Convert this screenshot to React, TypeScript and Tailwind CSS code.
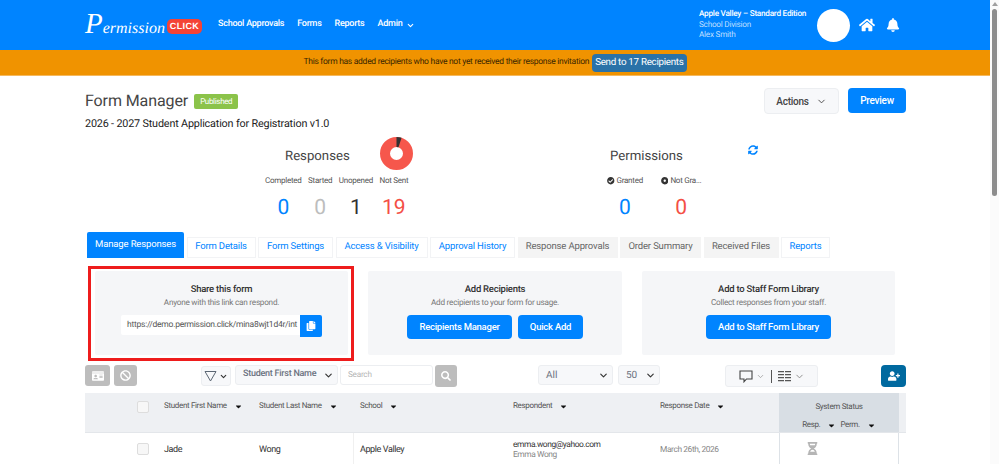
import { ChevronDown } from "lucide-react"
import {
  FaBan,
  FaBell,
  FaCaretDown,
  FaCheckCircle,
  FaCopy,
  FaDotCircle,
  FaHome,
  FaHourglassHalf,
  FaIdCard,
  FaSearch,
  FaSyncAlt,
  FaUserPlus,
} from "react-icons/fa"

function NavBar() {
  return (
    <header className="flex h-[50px] shrink-0 items-center bg-[#0084ff] pl-[85px] text-white">
      <div className="relative flex h-[50px] w-[117px] items-center">
        <span className="mt-[-2px] whitespace-nowrap font-['Liberation_Serif',serif] text-[16px] italic leading-none tracking-normal">
          <span className="text-[29px]">P</span>ermission
        </span>
        <span className="absolute left-[82px] top-[19px] flex h-[15px] w-[35px] items-center justify-center rounded-[5px] bg-[#f44336] font-['Liberation_Sans',sans-serif] text-[9px] font-bold leading-none tracking-[0.4px]">
          CLICK
        </span>
      </div>
      <nav className="ml-[16px] flex items-center gap-[13px] text-[9px] font-medium">
        <span>School Approvals</span>
        <span>Forms</span>
        <span>Reports</span>
        <span className="flex items-center gap-[4px]">
          Admin <ChevronDown size={9} strokeWidth={3} />
        </span>
      </nav>
      <div className="ml-auto flex items-center pr-[90px]">
        <div className="w-[118px] whitespace-nowrap text-[8.2px] leading-[10.5px] text-[#bfdfff]">
          <div className="font-medium text-white">Apple Valley – Standard Edition</div>
          <div>School Division</div>
          <div>Alex Smith</div>
        </div>
        <div className="h-[33px] w-[33px] rounded-full bg-white" />
        <FaHome className="ml-[9px] text-[16px]" />
        <FaBell className="ml-[11px] text-[14px]" />
      </div>
    </header>
  )
}

function Notice() {
  return (
    <div className="flex h-[26px] shrink-0 items-center justify-center gap-[3px] border-b border-[#f5b95e] bg-[#f09300] text-[8.5px] tracking-[-0.29px] text-[#3a2600]">
      <span>This form has added recipients who have not yet received their response invitation</span>
      <span className="rounded-[4px] bg-[#2a72a8] px-[3px] text-[9.8px] leading-[18px] text-white">Send to 17 Recipients</span>
    </div>
  )
}

function Stat({ label, value, color, icon }: { label: string; value: string; color: string; icon?: React.ReactNode }) {
  return (
    <div className="flex flex-col items-center">
      <div className="flex items-center gap-[2px] whitespace-nowrap text-[8px] leading-[12px] text-[#555]">
        {icon}
        {label}
      </div>
      <div className={`mt-[9px] text-[21px] leading-[24px] tracking-normal ${color}`}>{value}</div>
    </div>
  )
}

function Stats() {
  return (
    <section className="mt-[5px] flex h-[93px]">
      <div className="ml-[180px] w-[150px]">
        <div className="relative h-[34px]">
          <h2 className="ml-[20px] pt-[11px] text-[13.2px] leading-[18px] tracking-normal text-[#444]">Responses</h2>
          <svg className="absolute left-[115px] top-[0px]" width="33" height="33" viewBox="0 0 33 33">
            <circle cx="16.5" cy="16.5" r="11.5" fill="none" stroke="#f6574c" strokeWidth="10" />
            <circle cx="16.5" cy="16.5" r="11.5" fill="none" stroke="#333" strokeWidth="10" strokeDasharray="3.6 72.7" transform="rotate(-90 16.5 16.5)" />
          </svg>
        </div>
        <div className="mt-[4px] flex gap-[6.5px]">
          <Stat label="Completed" value="0" color="text-[#0084ff]" />
          <Stat label="Started" value="0" color="text-[#bdbdbd]" />
          <Stat label="Unopened" value="1" color="text-[#333]" />
          <Stat label="Not Sent" value="19" color="text-[#f44f45]" />
        </div>
      </div>
      <div className="ml-[192px] w-[135px]">
        <h2 className="ml-[3px] pt-[11px] text-[13.2px] leading-[18px] tracking-normal text-[#444]">Permissions</h2>
        <div className="mt-[9px] flex gap-[18px]">
          <Stat label="Granted" value="0" color="text-[#0084ff]" icon={<FaCheckCircle className="text-[7.5px] text-[#333]" />} />
          <Stat label="Not Gra..." value="0" color="text-[#f44f45]" icon={<FaDotCircle className="text-[7.5px] text-[#333]" />} />
        </div>
      </div>
      <FaSyncAlt className="ml-[6px] mt-[8px] text-[10px] text-[#0084ff]" />
    </section>
  )
}

const tabs = [
  { label: "Form Details", width: "w-[69px]" },
  { label: "Form Settings", width: "w-[75px]" },
  { label: "Access & Visibility", width: "w-[92px]" },
  { label: "Approval History", width: "w-[85px]" },
  { label: "Response Approvals", width: "w-[100px]", off: true },
  { label: "Order Summary", width: "w-[81px]", off: true },
  { label: "Received Files", width: "w-[75px]", off: true },
  { label: "Reports", width: "w-[49px]" },
]

function Tabs() {
  return (
    <div className="ml-[2px] flex items-end gap-[2.5px] text-[9.5px] tracking-[-0.15px]">
      <div className="flex h-[26px] w-[97px] items-center justify-center rounded-t-[2px] bg-[#0084ff] text-white">Manage Responses</div>
      {tabs.map((tab) => (
        <div
          key={tab.label}
          className={`flex h-[21px] items-center justify-center border ${tab.width} ${
            tab.off ? "border-[#f4f4f4] bg-[#f4f4f4] text-[#666]" : "border-[#f2f3f5] bg-white text-[#0084ff]"
          }`}
        >
          {tab.label}
        </div>
      ))}
    </div>
  )
}

function BlueButton({ children, className }: { children: React.ReactNode; className: string }) {
  return (
    <button className={`flex h-[24px] items-center justify-center rounded-[4px] bg-[#0084ff] text-[9.5px] font-medium text-white ${className}`}>
      {children}
    </button>
  )
}

function Card({ title, text, children, className }: { title: string; text: string; children: React.ReactNode; className: string }) {
  return (
    <div className={`flex h-[84px] flex-col items-center rounded-[2px] bg-[#f5f6f8] pt-[12px] ${className}`}>
      <div className="text-[9.5px] font-medium leading-[13px] text-[#333]">{title}</div>
      <div className="mt-[1px] text-[8.2px] leading-[12px] text-[#777]">{text}</div>
      <div className="mt-[6px] flex gap-[6px]">{children}</div>
    </div>
  )
}

function Cards() {
  return (
    <div className="mt-[8px] flex items-start">
      <div className="ml-[3px] h-[95px] w-[266px] border-[3px] border-[#ee1c1c] pb-[3px] pl-[4px] pr-[3px] pt-[2px]">
        <Card title="Share this form" text="Anyone with this link can respond." className="w-full">
          <div className="flex h-[22px] items-start">
            <div className="flex h-[20px] w-[179px] items-center overflow-hidden rounded-l-[2px] bg-white pl-[6px] text-[8.5px] whitespace-nowrap text-[#555]">
              https://demo.permission.click/mina8wjt1d4r/int
            </div>
            <button className="flex h-[22px] w-[22px] items-center justify-center rounded-r-[2px] bg-[#0084ff] text-white">
              <FaCopy className="text-[10px]" />
            </button>
          </div>
        </Card>
      </div>
      <Card title="Add Recipients" text="Add recipients to your form for usage." className="ml-[14px] mt-[5px] w-[254px]">
        <BlueButton className="w-[105px]">Recipients Manager</BlueButton>
        <BlueButton className="w-[65px]">Quick Add</BlueButton>
      </Card>
      <Card title="Add to Staff Form Library" text="Collect responses from your staff." className="ml-[20px] mt-[5px] w-[253px]">
        <BlueButton className="w-[125px]">Add to Staff Form Library</BlueButton>
      </Card>
    </div>
  )
}

function GreyButton({ children, className }: { children: React.ReactNode; className: string }) {
  return <button className={`flex items-center justify-center rounded-[3px] bg-[#bdbdbd] text-white ${className}`}>{children}</button>
}

function Select({ label, className }: { label: string; className: string }) {
  return (
    <div className={`flex h-[20px] items-center justify-between whitespace-nowrap rounded-[3px] border border-[#eceef1] bg-[#f7f8fa] pl-[7px] pr-[3px] text-[#6b7280] ${className}`}>
      <span>{label}</span>
      <ChevronDown size={11} strokeWidth={2.5} className="text-[#333]" />
    </div>
  )
}

function Toolbar() {
  return (
    <div className="mt-[4px] flex h-[23px] items-start">
      <GreyButton className="h-[21px] w-[25px]">
        <FaIdCard className="text-[12px]" />
      </GreyButton>
      <GreyButton className="ml-[4px] h-[21px] w-[23px]">
        <FaBan className="text-[11px]" />
      </GreyButton>
      <div className="ml-[64px] mt-[1px] flex h-[20px] w-[30px] items-center justify-center gap-[2px] rounded-[3px] border border-[#eceef1] bg-[#f7f8fa]">
        <svg width="13" height="12" viewBox="0 0 13 12" fill="none" stroke="#5b6673" strokeWidth="1">
          <path d="M1 1.5h11L6.5 11z" />
        </svg>
        <ChevronDown size={9} strokeWidth={3} className="text-[#333]" />
      </div>
      <Select label="Student First Name" className="ml-[4px] w-[103px] text-[9px] font-medium" />
      <div className="ml-[2px] flex h-[20px] w-[93px] items-center rounded-[3px] border border-[#eceef1] bg-white pl-[7px] text-[8.2px] text-[#b5b5b5]">Search</div>
      <GreyButton className="ml-[2px] h-[22px] w-[22px]">
        <FaSearch className="text-[10px]" />
      </GreyButton>
      <Select label="All" className="ml-[81px] w-[75px] text-[10px] tracking-normal" />
      <Select label="50" className="ml-[5px] w-[42px] text-[10px] tracking-normal" />
      <div className="ml-[65px] flex h-[22px] w-[93px] items-center justify-center rounded-[3px] border border-[#eceef1] bg-[#f7f8fa] text-[#555]">
        <svg width="14" height="13" viewBox="0 0 14 13" fill="none" stroke="#444" strokeWidth="1.1">
          <path d="M1 1h12v8H7.5L5 11.8V9H1z" />
        </svg>
        <ChevronDown size={9} className="ml-[3px] text-[#999]" />
        <span className="mx-[6px] h-[13px] w-px bg-[#555]" />
        <ColumnsGlyph />
        <ChevronDown size={11} className="ml-[3px] text-[#888]" />
      </div>
      <button className="ml-[63px] flex h-[22px] w-[25px] items-center justify-center rounded-[4px] bg-[#00699f] text-white">
        <FaUserPlus className="text-[12px]" />
      </button>
    </div>
  )
}

function ColumnsGlyph() {
  return (
    <svg width="13" height="11" viewBox="0 0 13 11" fill="#555">
      <path d="M0 0h6v1.2H0zM7 0h6v1.2H7zM0 3h6v1.2H0zM7 3h6v1.2H7zM0 6h6v1.2H0zM7 6h6v1.2H7zM0 9h6v1.2H0zM7 9h6v1.2H7z" />
    </svg>
  )
}

function Checkbox() {
  return <span className="block h-[12px] w-[12px] rounded-[2px] border border-[#ddd] bg-[#f7f7f7]" />
}

function SortLabel({ label, className }: { label: string; className?: string }) {
  return (
    <span className={`flex items-center gap-[7px] ${className ?? ""}`}>
      {label}
      <FaCaretDown className="text-[9px] text-[#111]" />
    </span>
  )
}

function Table() {
  return (
    <div className="mt-[5px] text-[#555]">
      <div className="flex h-[40px] border-b border-[#e3e6ea] bg-[#eef0f3] text-[8px] tracking-[-0.33px]">
        <div className="ml-[52px] mt-[8px] w-[27px]">
          <Checkbox />
        </div>
        <SortLabel label="Student First Name" className="mt-[8px] h-[10px] w-[95px]" />
        <SortLabel label="Student Last Name" className="mt-[8px] h-[10px] w-[101px]" />
        <SortLabel label="School" className="mt-[8px] h-[10px] w-[153px]" />
        <SortLabel label="Respondent" className="mt-[8px] h-[10px] w-[147px]" />
        <SortLabel label="Response Date" className="mt-[8px] h-[10px] w-[119px]" />
        <div className="flex w-[120px] flex-col items-center bg-[#d8dee4]">
          <div className="mt-[9px] leading-[10px]">System Status</div>
          <div className="mt-[8px] flex gap-[4px] leading-[10px]">
            <SortLabel label="Resp." />
            <SortLabel label="Perm." />
          </div>
        </div>
      </div>
      <div className="flex h-[31px] text-[9px] tracking-[-0.4px] text-[#333]">
        <div className="ml-[52px] mt-[10px] w-[27px]">
          <Checkbox />
        </div>
        <div className="w-[95px] pt-[11px]">Jade</div>
        <div className="w-[94px] pt-[11px]">Wong</div>
        <div className="w-[160px] border-l border-[#f0f0f0] pl-[6px] pt-[11px]">Apple Valley</div>
        <div className="w-[147px] pt-[7px] text-[8.4px] leading-[10px]">
          <div>emma.wong@yahoo.com</div>
          <div className="text-[#888]">Emma Wong</div>
        </div>
        <div className="w-[119px] pt-[11px] text-[8.4px] text-[#888]">March 26th, 2026</div>
        <div className="w-[120px] border-x border-[#dde2e7] pl-[26px] pt-[9px]">
          <FaHourglassHalf className="text-[13px] text-[#b5b5b5]" />
        </div>
      </div>
    </div>
  )
}

function Scrollbar() {
  return (
    <aside className="flex w-[9px] shrink-0 flex-col items-center bg-[#fbfbfb]">
      <span className="mt-[2px] border-x-[3px] border-b-[4px] border-x-transparent border-b-[#a0a0a0]" />
      <span className="mt-[3px] h-[187px] w-[5px] rounded-full bg-[#8d8d8d]" />
    </aside>
  )
}

export default function App() {
  return (
    <div className="flex h-[464px] w-[999px] overflow-hidden bg-white font-['Roboto',sans-serif] tracking-[-0.25px] [text-rendering:geometricPrecision]">
      <div className="flex w-[990px] flex-col">
        <NavBar />
        <Notice />
        <main className="ml-[85px] w-[821px]">
          <div className="mt-[12px] flex items-start">
            <div>
              <div className="flex items-center">
                <h1 className="text-[16px] leading-[26px] tracking-[-0.1px] text-[#444]">Form Manager</h1>
                <span className="ml-[6px] rounded-[2px] bg-[#8bc34a] px-[6px] text-[8px] leading-[15px] tracking-[-0.33px] text-white">Published</span>
              </div>
              <p className="mt-[2px] text-[10.8px] leading-[16px] tracking-[-0.17px] text-[#222]">2026 - 2027 Student Application for Registration v1.0</p>
            </div>
            <button className="ml-auto flex h-[26px] w-[75px] items-center justify-center gap-[7px] rounded-[4px] border border-[#eceef1] bg-[#f7f8fa] text-[10px] font-medium text-[#444]">
              Actions <ChevronDown size={11} />
            </button>
            <button className="ml-[9px] h-[25px] w-[58px] rounded-[4px] bg-[#0084ff] text-[10px] font-medium text-white">Preview</button>
          </div>
          <Stats />
          <div className="mt-[2px]">
            <Tabs />
          </div>
          <Cards />
          <Toolbar />
          <Table />
        </main>
      </div>
      <Scrollbar />
    </div>
  )
}
